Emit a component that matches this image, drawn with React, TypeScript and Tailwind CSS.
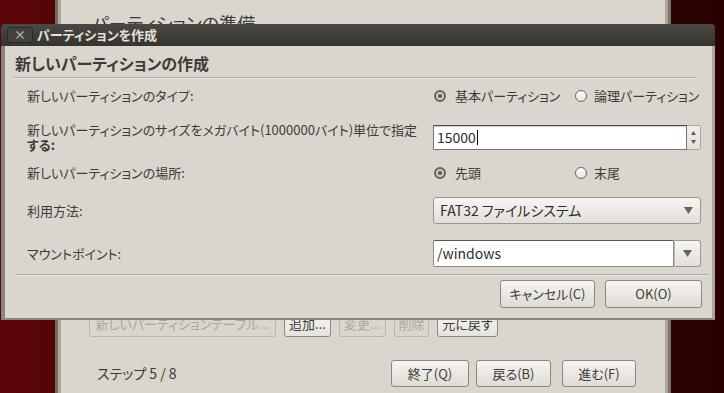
import React from 'react';

const DownArrow = () => (
    <svg width="9" height="7" viewBox="0 0 9 7">
        <polygon points="0,0 9,0 4.5,7" fill="#67625b" />
    </svg>
);

const Radio = ({ checked }: { checked?: boolean }) =>
    checked ? (
        <span className="flex h-[12px] w-[12px] items-center justify-center rounded-full border-2 border-[#6a645c] bg-[#cfcac2]">
            <span className="h-[4px] w-[4px] rounded-full bg-[#5b554e]" />
        </span>
    ) : (
        <span className="h-[12px] w-[12px] rounded-full border border-[#6b665e] bg-gradient-to-b from-white to-[#e6e3de]" />
    );

const Button = ({ label, className }: { label: string; className: string }) => (
    <button className={`flex items-center justify-center rounded-[3px] border border-[#8c877e] bg-gradient-to-b from-[#f6f5f2] to-[#dfdbd4] text-[13px] text-[#3c3b37] ${className}`}>
        {label}
    </button>
);

const App = () => {
    return (
        <div className="relative h-[393px] w-[724px] overflow-hidden bg-gradient-to-r from-[#5a0505] via-[#3a0202] to-[#2a0101] font-['Noto_Sans_CJK_JP',sans-serif] [font-feature-settings:'palt']">
            {/* Installer window behind */}
            <div className="absolute left-[55px] top-0 bottom-0 flex w-[616px] flex-col border-l-[3px] border-r-[3px] border-l-[#706b63] border-r-[#77726a] bg-[#dad6ce] shadow-[inset_3px_0_0_#aba69d,inset_-3px_0_0_#aba69d]">
                <div className="pl-[34px] pt-[11px] text-[18px] leading-[24px] text-[#3c3b37]">パーティションの準備</div>
                <div className="flex-1" />

                {/* Partition table buttons */}
                <div className="flex h-[26px] items-center gap-[8px] pl-[31px] text-[13px]">
                    <span className="flex h-full w-[187px] items-center justify-center rounded-[3px] border border-[#bab5ac] text-[#aaa59d]">新しいパーティションテーブル...</span>
                    <span className="flex h-full w-[47px] items-center justify-center rounded-[3px] border border-[#8c877e] bg-gradient-to-b from-[#f6f5f2] to-[#e6e3dd] text-[#3c3b37]">追加...</span>
                    <span className="flex h-full w-[47px] items-center justify-center rounded-[3px] border border-[#bab5ac] text-[#aaa59d]">変更...</span>
                    <span className="flex h-full w-[35px] items-center justify-center rounded-[3px] border border-[#bab5ac] text-[#aaa59d]">削除</span>
                    <span className="flex h-full w-[61px] items-center justify-center rounded-[3px] border border-[#8c877e] bg-gradient-to-b from-[#f6f5f2] to-[#e6e3dd] text-[#3c3b37]">元に戻す</span>
                </div>

                {/* Footer */}
                <div className="mb-[6px] mt-[23px] flex h-[27px] items-center pl-[39px] pr-[32px]">
                    <span className="text-[14px] text-[#3c3b37]">ステップ 5 / 8</span>
                    <div className="ml-auto flex gap-[7px]">
                        <Button label="終了(Q)" className="h-[27px] w-[78px]" />
                        <Button label="戻る(B)" className="h-[27px] w-[75px]" />
                        <Button label="進む(F)" className="ml-[4px] h-[27px] w-[74px]" />
                    </div>
                </div>
            </div>

            {/* Create partition dialog */}
            <div className="absolute left-[1px] top-[24px] flex h-[296px] w-[714px] flex-col">
                <div className="flex h-[22px] items-center rounded-t-[4px] bg-gradient-to-b from-[#4a4944] to-[#34332f] pl-[6px]">
                    <span className="flex h-[16px] w-[26px] items-center justify-center rounded-[3px] border border-[#2a2926] bg-[#43423d] text-[12px] font-bold leading-none text-[#aeaaa2]">×</span>
                    <span className="ml-[4px] text-[13px] font-bold text-[#e4e0d8]">パーティションを作成</span>
                </div>

                <div className="flex flex-1 flex-col border-b-2 border-l-4 border-r-[3px] border-b-[#8b867d] border-l-[#8b867d] border-r-[#aca79e] bg-[#dad6ce] text-[13px] text-[#3c3b37]">
                    <div className="flex h-[31px] items-center pl-[10px] pt-[3px] text-[16px] font-bold text-[#3c3b37]">新しいパーティションの作成</div>
                    <div className="ml-[8px] mr-[16px] h-px bg-[#b4afa6]" />
                    <div className="ml-[8px] mr-[16px] h-px bg-[#e8e5df]" />

                    <div className="flex flex-col pl-[22px] pr-[11px]">
                        {/* Type */}
                        <div className="mt-[7px] grid h-[20px] grid-cols-[406px_1fr] items-center">
                            <span>新しいパーティションのタイプ:</span>
                            <div className="flex items-center pl-[1px]">
                                <div className="flex w-[141px] items-center gap-[9px]">
                                    <Radio checked />
                                    <span>基本パーティション</span>
                                </div>
                                <div className="flex items-center gap-[7px]">
                                    <Radio />
                                    <span>論理パーティション</span>
                                </div>
                            </div>
                        </div>

                        {/* Size */}
                        <div className="mt-[16px] grid h-[25px] grid-cols-[406px_1fr] items-center">
                            <span className="leading-[15px]">
                                新しいパーティションのサイズをメガバイト(1000000バイト)単位で指定
                                <br />
                                <span className="font-bold">する:</span>
                            </span>
                            <div className="flex h-[25px]">
                                <div className="flex flex-1 items-center border border-[#7b766e] border-t-[#4e4a44] bg-white pl-[3px] shadow-[inset_0_1px_1px_rgba(0,0,0,0.2)]">
                                    <span className="text-[14px] text-[#2e2d2a]">15000</span>
                                    <span className="ml-[1px] h-[15px] w-px bg-black" />
                                </div>
                                <div className="flex w-[14px] flex-col items-center justify-center gap-[5px] rounded-r-[2px] border border-l-0 border-[#aaa59c] bg-gradient-to-b from-[#f2f0ec] to-[#e2dfd9]">
                                    <svg width="5" height="4" viewBox="0 0 5 4">
                                        <polygon points="2.5,0 5,4 0,4" fill="#5f5a53" />
                                    </svg>
                                    <svg width="5" height="4" viewBox="0 0 5 4">
                                        <polygon points="0,0 5,0 2.5,4" fill="#5f5a53" />
                                    </svg>
                                </div>
                            </div>
                        </div>

                        {/* Location */}
                        <div className="mt-[16px] grid h-[20px] grid-cols-[406px_1fr] items-center">
                            <span>新しいパーティションの場所:</span>
                            <div className="flex items-center pl-[1px]">
                                <div className="flex w-[141px] items-center gap-[9px]">
                                    <Radio checked />
                                    <span>先頭</span>
                                </div>
                                <div className="flex items-center gap-[7px]">
                                    <Radio />
                                    <span>末尾</span>
                                </div>
                            </div>
                        </div>

                        {/* Use as */}
                        <div className="mt-[14px] grid h-[27px] grid-cols-[406px_1fr] items-center">
                            <span>利用方法:</span>
                            <div className="flex h-[27px] items-center rounded-[3px] border border-[#9a958d] bg-gradient-to-b from-[#f7f6f3] to-[#e2dfd9] pl-[6px] pr-[7px]">
                                <span className="text-[14px] text-[#2e2d2a]">FAT32 ファイルシステム</span>
                                <span className="ml-auto flex">
                                    <DownArrow />
                                </span>
                            </div>
                        </div>

                        {/* Mount point */}
                        <div className="mt-[16px] grid h-[27px] grid-cols-[406px_1fr] items-center">
                            <span>マウントポイント:</span>
                            <div className="flex h-[27px]">
                                <div className="flex flex-1 items-center rounded-l-[2px] border border-[#8d887f] border-t-[#5e5a53] bg-white pl-[3px]">
                                    <span className="text-[14px] text-[#2e2d2a]">/windows</span>
                                </div>
                                <div className="flex w-[27px] items-center justify-center rounded-r-[3px] border border-l-[#c2bdb4] border-[#9a958d] bg-gradient-to-b from-[#f7f6f3] to-[#e2dfd9]">
                                    <DownArrow />
                                </div>
                            </div>
                        </div>
                    </div>

                    <div className="ml-[10px] mr-[3px] mt-[7px] h-px bg-[#b4afa6]" />
                    <div className="ml-[10px] mr-[3px] h-px bg-[#e8e5df]" />

                    <div className="mt-[4px] flex justify-end gap-[10px] pr-[10px]">
                        <Button label="キャンセル(C)" className="h-[28px] w-[95px]" />
                        <Button label="OK(O)" className="h-[28px] w-[97px]" />
                    </div>
                </div>
            </div>
        </div>
    );
};

export default App;
